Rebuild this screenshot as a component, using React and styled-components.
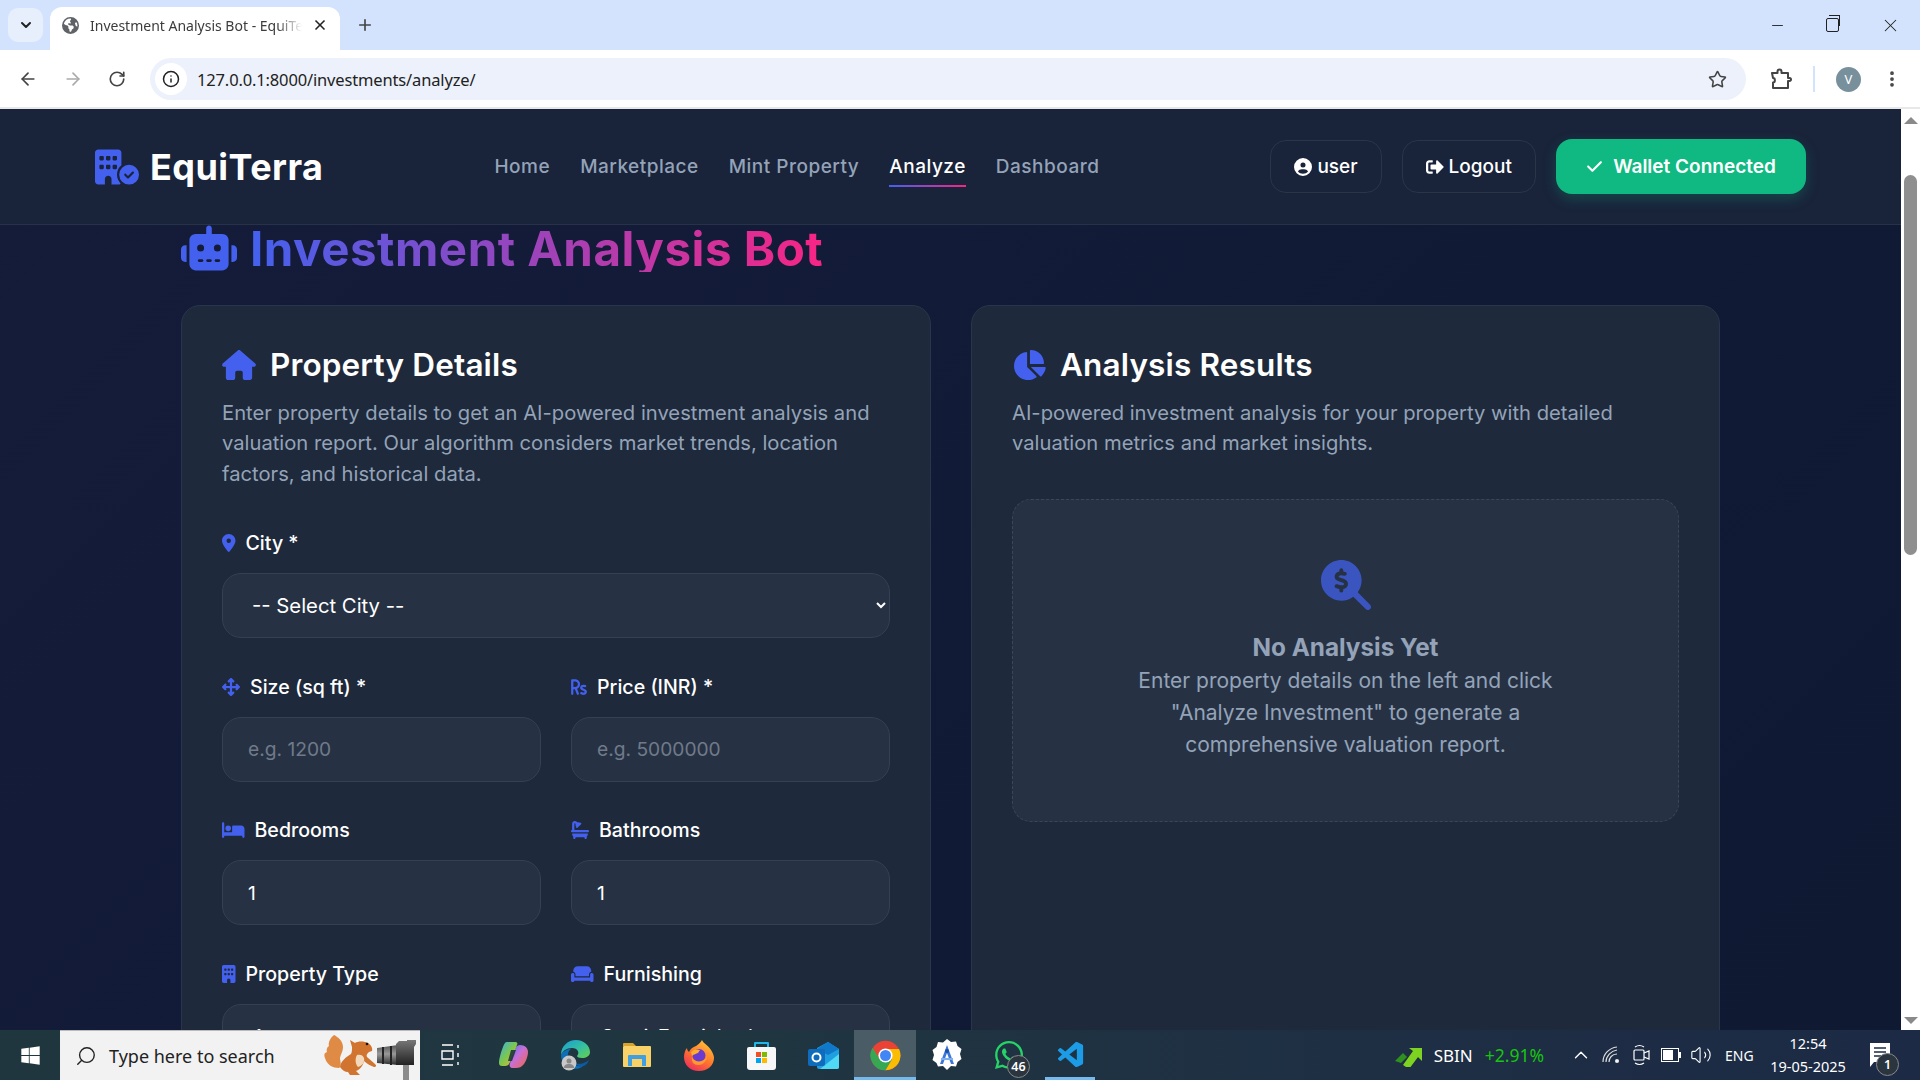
import React from 'react';
import styled, { createGlobalStyle } from 'styled-components';
import { ArrowLeft, ArrowRight, RotateCw, Info, Star, MoreVertical, ChevronDown, Plus, X, Minus, Search, ChevronUp, Volume2 } from 'lucide-react';
import {
  FaBuildingCircleCheck, FaRobot, FaHouse, FaChartPie, FaLocationDot, FaArrowsUpDownLeftRight,
  FaBed, FaBath, FaBuilding, FaCouch, FaMagnifyingGlassDollar, FaCircleUser,
  FaCheck, FaEarthAmericas, FaWindows, FaRupeeSign,
} from 'react-icons/fa6';
import { FaWhatsapp, FaSignOutAlt } from 'react-icons/fa';
import { VscVscode } from 'react-icons/vsc';

const GlobalStyle = createGlobalStyle`
  html, body { margin: 0; padding: 0; height: 100%; overflow: hidden; }
  * { box-sizing: border-box; }
  body { font-family: Inter, "Open Sans", sans-serif; }
`;

const Screen = styled.div`
  width: 1920px;
  height: 1080px;
  display: flex;
  flex-direction: column;
  overflow: hidden;
`;

/* browser chrome */
const TabStrip = styled.div`
  height: 50px;
  background: #d3e3fd;
  display: flex;
  align-items: flex-end;
  padding-left: 8px;
  flex-shrink: 0;
  color: #444;
`;
const TabList = styled.button`
  width: 35px;
  height: 34px;
  margin-bottom: 8px;
  border: 0;
  border-radius: 10px;
  background: #e8effc;
  display: flex;
  align-items: center;
  justify-content: center;
  color: #222;
  padding: 0;
`;
const Tab = styled.div`
  width: 290px;
  height: 43px;
  margin-left: 7px;
  background: #fff;
  border-radius: 12px 12px 0 0;
  display: flex;
  align-items: center;
  padding: 0 12px 7px;
  font: 14px "Noto Sans", sans-serif;
  color: #3c3c3c;
`;
const TabTitle = styled.span`
  flex: 1;
  margin: 0 10px 0 11px;
  white-space: nowrap;
  overflow: hidden;
  mask-image: linear-gradient(90deg, #000 88%, transparent);
`;
const NewTab = styled.div`
  margin: 0 0 13px 16px;
  height: 24px;
  display: flex;
  align-items: center;
`;
const WindowControls = styled.div`
  margin-left: auto;
  height: 50px;
  display: flex;
  align-items: center;
  padding-right: 19px;
  gap: 36px;
  color: #222;
`;
const RestoreIcon = styled.span`
  width: 13px;
  height: 14px;
  border: 1.5px solid #222;
  border-radius: 2px;
  margin: 0 5px 0 4px;
  position: relative;
  &::after {
    content: '';
    position: absolute;
    left: 2px;
    top: -4px;
    width: 10px;
    height: 10px;
    border-top: 1.5px solid #222;
    border-right: 1.5px solid #222;
  }
`;
const Toolbar = styled.div`
  height: 59px;
  background: #fff;
  border-bottom: 2px solid #e8e8e8;
  border-radius: 12px 12px 0 0;
  display: flex;
  align-items: center;
  padding: 1px 0 0 18px;
  flex-shrink: 0;
  color: #444;
`;
const NavIcon = styled.span`
  width: 45px;
  display: flex;
  color: ${p => (p.$dim ? '#aaa' : '#444')};
`;
const Omnibox = styled.div`
  width: 1596px;
  height: 42px;
  margin-left: -3px;
  background: #ecf1fb;
  border-radius: 21px;
  display: flex;
  align-items: center;
  padding: 0 19px 0 5px;
`;
const InfoChip = styled.span`
  width: 32px;
  height: 32px;
  background: #fff;
  border-radius: 50%;
  display: flex;
  align-items: center;
  justify-content: center;
  color: #222;
`;
const Url = styled.span`
  flex: 1;
  margin-left: 10px;
  font: 16.5px "Noto Sans", sans-serif;
  letter-spacing: -0.15px;
  color: #222;
`;
const ToolbarEnd = styled.div`
  display: flex;
  align-items: center;
  margin-left: 24px;
`;
const Divider = styled.span`
  width: 2px;
  height: 26px;
  background: #d3e3fd;
  margin: 0 21px 0 21px;
`;
const Avatar = styled.span`
  width: 25px;
  height: 25px;
  border-radius: 50%;
  background: #78909c;
  color: #fff;
  font: 13px "Noto Sans", sans-serif;
  display: flex;
  align-items: center;
  justify-content: center;
  margin-right: 21px;
`;

/* page */
const Viewport = styled.div`
  flex: 1;
  min-height: 0;
  display: flex;
`;
const Page = styled.div`
  flex: 1;
  min-width: 0;
  overflow: hidden;
  background: linear-gradient(135deg, #141c3a 0%, #111a35 60%, #101932 100%);
`;
const Scrollbar = styled.div`
  width: 19px;
  background: #fff;
  display: flex;
  flex-direction: column;
  align-items: center;
  padding: 8px 0 6px;
`;
const ScrollArrow = styled.span`
  width: 0;
  height: 0;
  border-left: 7px solid transparent;
  border-right: 7px solid transparent;
  ${p => (p.$down
    ? 'border-top: 7px solid #8a8a8a; margin-top: auto;'
    : 'border-bottom: 7px solid #8a8a8a;')}
`;
const ScrollThumb = styled.span`
  width: 13px;
  height: 380px;
  margin-top: 51px;
  border-radius: 7px;
  background: #8f8f8f;
`;
const Nav = styled.header`
  height: 116px;
  background: #19233a;
  border-bottom: 1px solid #283246;
  display: flex;
  align-items: center;
  justify-content: space-between;
  padding: 0 95px;
`;
const Logo = styled.div`
  display: flex;
  align-items: center;
  gap: 11px;
  font: 700 36px Inter, sans-serif;
  letter-spacing: 0.45px;
  color: #fff;
  svg { color: #4361ee; font-size: 44px; }
`;
const NavLinks = styled.nav`
  display: flex;
  gap: 30px;
`;
const NavLink = styled.a`
  position: relative;
  font-size: 19px;
  font-weight: 500;
  letter-spacing: 0.5px;
  color: ${p => (p.$active ? '#fff' : '#94a3b8')};
  ${p => p.$active && `
    &::after {
      content: '';
      position: absolute;
      left: 0;
      right: 0;
      bottom: -9px;
      height: 2px;
      background: linear-gradient(90deg, #4361ee, #f72585);
    }
  `}
`;
const NavActions = styled.div`
  display: flex;
  align-items: center;
  gap: 20px;
`;
const GhostButton = styled.button`
  height: 53px;
  padding: 0 23px;
  border: 1px solid #2b3548;
  border-radius: 16px;
  background: transparent;
  display: flex;
  align-items: center;
  gap: 5px;
  font: 500 19px Inter, sans-serif;
  color: #fff;
  svg { height: 18px; width: 18px; }
`;
const WalletButton = styled.button`
  height: 55px;
  width: 250px;
  border: 0;
  border-radius: 16px;
  background: #10b981;
  box-shadow: 0 5px 14px rgba(16, 185, 129, 0.25);
  display: flex;
  align-items: center;
  justify-content: center;
  gap: 10px;
  font: 600 19px Inter, sans-serif;
  color: #fff;
`;
const Main = styled.main`
  width: 1539px;
  margin: 0 auto;
`;
const PageTitle = styled.h1`
  margin: 0;
  height: 80px;
  display: flex;
  align-items: flex-start;
  gap: 13px;
  font: 700 47.5px/47px Inter, sans-serif;
  letter-spacing: 0.5px;
  svg { color: #4361ee; font-size: 56px; margin-top: -5px; flex-shrink: 0; }
`;
const GradientText = styled.span`
  width: 572px;
  white-space: nowrap;
  background: linear-gradient(90deg, #4361ee, #f72585);
  -webkit-background-clip: text;
  background-clip: text;
  color: transparent;
`;
const Columns = styled.div`
  display: grid;
  grid-template-columns: 750px 749px;
  gap: 40px;
`;
const Card = styled.section`
  background: #1e293b;
  border: 1px solid #2a3549;
  border-radius: 19px;
  padding: 40px 40px;
  height: 1000px;
`;
const CardTitle = styled.h2`
  margin: 0 0 14px;
  display: flex;
  align-items: center;
  gap: 14px;
  font: 600 31.5px/38px Inter, sans-serif;
  letter-spacing: 0.15px;
  color: #fff;
  svg { color: #4361ee; height: 30px; width: 34px; }
`;
const CardText = styled.p`
  margin: 0;
  font-size: 20.2px;
  line-height: 30.4px;
  color: #94a3b8;
`;
const FormBlock = styled.div`
  margin-top: 39px;
`;
const FieldRow = styled.div`
  display: grid;
  grid-template-columns: 319px 319px;
  gap: 30px;
  margin-top: 33.5px;
`;
const Field = styled.div`
  min-width: 0;
`;
const Label = styled.label`
  display: flex;
  align-items: center;
  height: 30px;
  margin-bottom: 15px;
  gap: 10px;
  font-size: 19.6px;
  font-weight: 500;
  color: #fff;
  svg { color: #4361ee; height: 18px; width: ${p => p.$iconWidth}px; }
`;
const controlStyles = `
  width: 100%;
  height: 65px;
  background: #263244;
  border: 1px solid #354052;
  border-radius: 19px;
  color: #fff;
  outline: none;
`;
const Input = styled.input`
  ${controlStyles}
  font: 400 19.2px Inter, sans-serif;
  padding: 0 25px;
`;
const PlaceholderInput = styled(Input)`
  &::placeholder { color: #707a89; }
`;
const Select = styled.select`
  ${controlStyles}
  font: 400 20.3px Inter, sans-serif;
  padding: 0 4px 0 25px;
`;
const EmptyState = styled.div`
  margin-top: 40px;
  width: 667px;
  height: 323px;
  background: #263244;
  border: 1px dashed #3a4659;
  border-radius: 19px;
  display: flex;
  flex-direction: column;
  align-items: center;
  padding: 60px 115px 0;
  text-align: center;
  svg { font-size: 50px; color: #3a55c0; margin-bottom: 22px; }
`;
const EmptyTitle = styled.h3`
  margin: 0;
  font: 700 24.3px/30px Inter, sans-serif;
  color: #94a3b8;
`;
const EmptyText = styled.p`
  margin: 3px 0 0;
  font-size: 21px;
  line-height: 32px;
  color: #94a3b8;
`;

/* taskbar */
const Taskbar = styled.footer`
  height: 50px;
  flex-shrink: 0;
  background: linear-gradient(90deg, #20363f 0%, #1f3540 40%, #1e2e44 75%, #1c2a45 100%);
  display: flex;
  align-items: center;
  color: #fff;
  font-family: "Noto Sans", sans-serif;
`;
const StartButton = styled.div`
  width: 60px;
  display: flex;
  justify-content: center;
  font-size: 21px;
`;
const SearchBox = styled.div`
  width: 360px;
  height: 50px;
  background: #f2f2f2;
  border-top: 1px solid #bbb;
  display: flex;
  align-items: center;
  padding-left: 15px;
  color: #222;
  font-size: 18px;
  gap: 12px;
  position: relative;
  overflow: hidden;
`;
const SearchIcon = styled(Search)`
  transform: scaleX(-1);
`;
const Mascot = styled.svg`
  position: absolute;
  right: 0;
  top: 0;
`;
const TaskIcon = styled.div`
  width: 62px;
  height: 50px;
  display: flex;
  align-items: center;
  justify-content: center;
  position: relative;
  background: ${p => (p.$active ? '#4a5c66' : 'transparent')};
  ${p => p.$open && `
    &::after {
      content: '';
      position: absolute;
      left: ${p.$active ? 0 : 5}px;
      right: ${p.$active ? 0 : 7}px;
      bottom: 0;
      height: 3px;
      background: #76b9ed;
    }
  `}
`;
const CountBadge = styled.span`
  position: absolute;
  right: ${p => p.$right}px;
  bottom: ${p => p.$bottom}px;
  min-width: 23px;
  height: 23px;
  border-radius: 50%;
  background: #2a3540;
  border: 1px solid #888;
  font-size: 12.5px;
  font-weight: 600;
  display: flex;
  align-items: center;
  justify-content: center;
  color: #fff;
`;
const Tray = styled.div`
  margin-left: auto;
  display: flex;
  align-items: center;
  height: 50px;
  padding-right: 19px;
  font-size: 17px;
`;
const Stock = styled.span`
  margin-left: 11px;
`;
const StockChange = styled.span`
  margin: 0 22px 0 12px;
  font-size: 17.5px;
  color: #16c60c;
`;
const TrayIcon = styled.span`
  width: 30px;
  display: flex;
  justify-content: center;
`;
const Lang = styled.span`
  margin-left: 9px;
  font-size: 14px;
  width: 30px;
`;
const Clock = styled.div`
  width: 96px;
  margin-left: 5px;
  text-align: center;
  font-size: 14.5px;
  line-height: 23px;
`;
const Notify = styled.div`
  width: 42px;
  margin-left: 3px;
  position: relative;
  height: 50px;
  display: flex;
  align-items: center;
  justify-content: center;
`;

const Extension = () => (
  <svg width="22" height="24" viewBox="0 0 22 24" fill="none" stroke="#444" strokeWidth="2" strokeLinejoin="round">
    <path d="M2 6h5.500V4.500a2 2 0 0 1 4 0V6H18v5h1.500a1.500 1.500 0 0 1 0 3H18v7H3v-5.500c2.500 0 2.500-4.500 0-4.500Z" />
  </svg>
);
const ChromeGlyph = () => (
  <svg width="31" height="31" viewBox="0 0 48 48">
    <circle cx="24" cy="24" r="23" fill="#ea4335" />
    <path d="M24 24 4 36A23 23 0 0 1 4 12L14 28Z" fill="#34a853" />
    <path d="M4 36 24 24 34 30 24 47A23 23 0 0 1 4 36Z" fill="#34a853" />
    <path d="M24 14H45A23 23 0 0 1 24 47L34 30Z" fill="#fbbc04" />
    <circle cx="24" cy="24" r="11" fill="#fff" />
    <circle cx="24" cy="24" r="8.5" fill="#4285f4" />
  </svg>
);
const Copilot = () => (
  <svg width="29" height="26" viewBox="0 0 29 26">
    <defs>
      <linearGradient id="cpa" x1="0" y1="0" x2="1" y2="1">
        <stop offset="0" stopColor="#2fb5ea" />
        <stop offset="0.5" stopColor="#7fc64b" />
        <stop offset="1" stopColor="#f4b73b" />
      </linearGradient>
      <linearGradient id="cpb" x1="0" y1="0" x2="1" y2="1">
        <stop offset="0" stopColor="#3a7be8" />
        <stop offset="0.45" stopColor="#c86fd8" />
        <stop offset="1" stopColor="#f0663f" />
      </linearGradient>
    </defs>
    <path d="M21 3c5 0 8 3 8 7 0 5-3 12-6 14-2 2-5 2-9 2-3 0-4-2-3-5l5-14c1-3 3-4 5-4Z" fill="url(#cpb)" />
    <path d="M8 0h8c2 0 3 1 2 3l-7 17c-1 3-3 4-5 4H3c-2 0-3-1-3-3 0-4 2-11 4-16 1-3 2-5 4-5Z" fill="url(#cpa)" />
    <path d="M12 8h5l-4 11h-4Z" fill="#17313a" opacity=".85" />
  </svg>
);
const Edge = () => (
  <svg width="30" height="32" viewBox="0 0 30 32">
    <defs>
      <linearGradient id="edg" x1="0" y1="0" x2="1" y2="1">
        <stop offset="0" stopColor="#1a9ad6" />
        <stop offset="0.55" stopColor="#35c1a0" />
        <stop offset="1" stopColor="#6ad04b" />
      </linearGradient>
    </defs>
    <path d="M1 16C1 7 8 1 16 1c8 0 14 6 14 12 0 4-4 6-8 6-3 0-5-1-5-2 3-3 1-8-5-8-6 0-9 3-11 7Z" fill="url(#edg)" />
    <path d="M1 16c3-5 7-6 10-6-3 2-4 6-2 10 2 5 7 8 12 7l3-1c-3 3-6 4-10 4C7 30 1 24 1 16Z" fill="#0c6fb8" />
    <path d="M29 21c-1 3-3 5-5 6-4 1-8 0-11-3 3 1 10 2 16-3Z" fill="#0c59a4" />
    <circle cx="9" cy="24" r="7.500" fill="#c8c8c8" />
    <circle cx="9" cy="22" r="2.500" fill="#888" />
    <path d="M4 29c0-3 2-4 5-4s5 1 5 4Z" fill="#888" />
  </svg>
);
const Explorer = () => (
  <svg width="28" height="24" viewBox="0 0 28 24">
    <path d="M0 1a1 1 0 0 1 1-1h9l3 3H0Z" fill="#d9a32a" />
    <rect y="3" width="28" height="21" rx="1" fill="#f8d268" />
    <path d="M5 13a1 1 0 0 1 1-1h16a1 1 0 0 1 1 1v10h-4v-7H9v7H5Z" fill="#3f9fe0" />
  </svg>
);
const Firefox = () => (
  <svg width="30" height="31" viewBox="0 0 30 31">
    <defs>
      <linearGradient id="ffx" x1="0.8" y1="0" x2="0.2" y2="1">
        <stop offset="0" stopColor="#ffc83a" />
        <stop offset="0.5" stopColor="#ff7a2c" />
        <stop offset="1" stopColor="#ee2a5e" />
      </linearGradient>
    </defs>
    <path d="M18 0c1 3 6 5 9 10 2 3 3 6 3 8 0 7-6 13-15 13S0 25 0 17c0-3 1-7 3-9 0 2 1 3 2 4 1-3 4-5 7-6 3-2 5-4 6-6Z" fill="url(#ffx)" />
    <circle cx="15" cy="15.500" r="6.500" fill="#6a3bd1" />
    <path d="M7 12c3-3 6-3 9-2l-2 3c-2 1-4 1-6 3Z" fill="#ffb02e" />
    <path d="M8 17c2 5 9 6 13 2 1-1 2-3 2-5 1 6-3 11-9 11-4 0-7-3-6-8Z" fill="#ff9a2e" />
  </svg>
);
const Store = () => (
  <svg width="29" height="29" viewBox="0 0 29 29">
    <path d="M8 7V2h13v5" fill="none" stroke="#1fb6e8" strokeWidth="2" strokeLinejoin="round" />
    <path d="M0 8a2 2 0 0 1 2-2h25a2 2 0 0 1 2 2v18a3 3 0 0 1-3 3H3a3 3 0 0 1-3-3Z" fill="#f7f7f7" />
    <rect x="9" y="11" width="5" height="5" fill="#f25022" />
    <rect x="15" y="11" width="5" height="5" fill="#7fba00" />
    <rect x="9" y="17" width="5" height="5" fill="#00a4ef" />
    <rect x="15" y="17" width="5" height="5" fill="#ffb900" />
  </svg>
);
const Outlook = () => (
  <svg width="31" height="27" viewBox="0 0 31 27">
    <path d="M9 6 20 0l11 7v18a2 2 0 0 1-2 2H11a2 2 0 0 1-2-2Z" fill="#1f9fe0" />
    <path d="M20 0l11 7-11 6-11-6Z" fill="#0f78c8" />
    <path d="M31 12v13a2 2 0 0 1-2 2H12Z" fill="#50d9f5" />
    <rect y="7" width="17" height="17" rx="2" fill="#0f6cbd" />
    <circle cx="8.500" cy="15.500" r="4" fill="none" stroke="#fff" strokeWidth="2" />
  </svg>
);
const StudioBadge = () => (
  <svg width="30" height="32" viewBox="0 0 30 32">
    <path d="M15 0l4 3 5-.5 1.500 4.500 4 3-1.500 5 1.500 5-4 3-1.500 4.500-5-.5-4 4-4-4-5 .5L4.500 24l-4-3 1.500-5-1.500-5 4-3L6 3l5 .5Z" fill="#fff" />
    <path d="M15 6 8 25h3l4-11 4 11h3Z" fill="#3b78d8" />
    <circle cx="15" cy="12" r="2" fill="#1d4fa8" />
    <path d="M9 19h12v2H9Z" fill="#7fb0ee" />
  </svg>
);
const Squirrel = () => (
  <Mascot width="100" height="50" viewBox="0 0 100 50">
    <defs>
      <linearGradient id="lens" x1="0" y1="0" x2="0" y2="1">
        <stop offset="0" stopColor="#555" />
        <stop offset="0.45" stopColor="#999" />
        <stop offset="1" stopColor="#2c2c2c" />
      </linearGradient>
      <linearGradient id="cam" x1="0" y1="0" x2="0" y2="1">
        <stop offset="0" stopColor="#777" />
        <stop offset="1" stopColor="#222" />
      </linearGradient>
    </defs>
    {/* tail */}
    <path d="M14 4c4 2 9 6 9 12 0 5-3 8-3 12 1 4 1 8-1 9-6 0-12-3-14-10-1-3-1-5 2-6-1-2 0-5 2-6-1-3 1-8 5-11Z" fill="#df8a45" />
    {/* body */}
    <path d="M20 36c1-6 6-10 11-13 1-2 1-4 1-7l-2-7 5 3c3-2 9-2 13 0 3 2 5 5 4 8l-3 1c-2 2-3 3-2 5l8 7c2 2 1 3-1 3-3-1-7-3-10-6-1 4-3 8-8 10l4 4-10 0-2-3c-3 0-6-2-8-5Z" fill="#d0742f" />
    <path d="M37 24c3-1 6 0 7 3 1 4-2 8-6 9-3-3-3-9-1-12Z" fill="#f2d9bd" />
    <circle cx="47" cy="13" r="1.300" fill="#1a1208" />
    {/* camera */}
    <path d="M57 17l21-3v20l-21-2Z" fill="url(#lens)" />
    <rect x="62" y="16" width="2" height="17" fill="#222" />
    <rect x="70" y="15" width="2" height="19" fill="#222" />
    <path d="M76 13l3-3h8v-1h9v4l-2 3v18H76Z" fill="url(#cam)" />
    <rect x="83" y="34" width="6" height="16" fill="#8b8b8b" />
  </Mascot>
);

const taskIcons = [
  { key: 'copilot', node: <Copilot /> },
  { key: 'edge', node: <Edge /> },
  { key: 'explorer', node: <Explorer /> },
  { key: 'firefox', node: <Firefox /> },
  { key: 'store', node: <Store /> },
  { key: 'outlook', node: <Outlook /> },
  { key: 'chrome', node: <ChromeGlyph />, active: true, open: true },
  { key: 'studio', node: <StudioBadge /> },
];

const App = () => {
  return (
    <Screen>
      <GlobalStyle />
      <TabStrip>
        <TabList><ChevronDown size={16} strokeWidth={3} /></TabList>
        <Tab>
          <FaEarthAmericas size={17} color="#5f6368" />
          <TabTitle>Investment Analysis Bot - EquiTerra</TabTitle>
          <X size={16} strokeWidth={2.5} color="#222" />
        </Tab>
        <NewTab><Plus size={18} strokeWidth={2.2} /></NewTab>
        <WindowControls>
          <Minus size={17} strokeWidth={1.3} />
          <RestoreIcon />
          <X size={21} strokeWidth={1.2} />
        </WindowControls>
      </TabStrip>
      <Toolbar>
        <NavIcon><ArrowLeft size={20} /></NavIcon>
        <NavIcon $dim><ArrowRight size={20} /></NavIcon>
        <NavIcon><RotateCw size={18} strokeWidth={2.2} /></NavIcon>
        <Omnibox>
          <InfoChip><Info size={18} /></InfoChip>
          <Url>127.0.0.1:8000/investments/analyze/</Url>
          <Star size={19} strokeWidth={2} />
        </Omnibox>
        <ToolbarEnd>
          <Extension />
          <Divider />
          <Avatar>V</Avatar>
          <MoreVertical size={20} strokeWidth={2.5} />
        </ToolbarEnd>
      </Toolbar>

      <Viewport>
        <Page>
          <Nav>
            <Logo><FaBuildingCircleCheck />EquiTerra</Logo>
            <NavLinks>
              <NavLink>Home</NavLink>
              <NavLink>Marketplace</NavLink>
              <NavLink>Mint Property</NavLink>
              <NavLink $active>Analyze</NavLink>
              <NavLink>Dashboard</NavLink>
            </NavLinks>
            <NavActions>
              <GhostButton><FaCircleUser />user</GhostButton>
              <GhostButton><FaSignOutAlt />Logout</GhostButton>
              <WalletButton><FaCheck size={17} />Wallet Connected</WalletButton>
            </NavActions>
          </Nav>
          <Main>
            <PageTitle><FaRobot /><GradientText>Investment Analysis Bot</GradientText></PageTitle>
            <Columns>
              <Card>
                <CardTitle><FaHouse />Property Details</CardTitle>
                <CardText>
                  Enter property details to get an AI-powered investment analysis and valuation report.
                  Our algorithm considers market trends, location factors, and historical data.
                </CardText>
                <FormBlock>
                  <Field>
                    <Label $iconWidth={13.5}><FaLocationDot />City *</Label>
                    <Select defaultValue="">
                      <option value="">-- Select City --</option>
                    </Select>
                  </Field>
                  <FieldRow>
                    <Field>
                      <Label $iconWidth={18}><FaArrowsUpDownLeftRight />Size (sq ft) *</Label>
                      <PlaceholderInput placeholder="e.g. 1200" />
                    </Field>
                    <Field>
                      <Label $iconWidth={16}><FaRupeeSign />Price (INR) *</Label>
                      <PlaceholderInput placeholder="e.g. 5000000" />
                    </Field>
                  </FieldRow>
                  <FieldRow>
                    <Field>
                      <Label $iconWidth={22.5}><FaBed />Bedrooms</Label>
                      <Input defaultValue="1" />
                    </Field>
                    <Field>
                      <Label $iconWidth={18}><FaBath />Bathrooms</Label>
                      <Input defaultValue="1" />
                    </Field>
                  </FieldRow>
                  <FieldRow>
                    <Field>
                      <Label $iconWidth={13.5}><FaBuilding />Property Type</Label>
                      <Select defaultValue="apartment">
                        <option value="apartment">Apartment</option>
                      </Select>
                    </Field>
                    <Field>
                      <Label $iconWidth={22.5}><FaCouch />Furnishing</Label>
                      <Select defaultValue="semi">
                        <option value="semi">Semi-Furnished</option>
                      </Select>
                    </Field>
                  </FieldRow>
                </FormBlock>
              </Card>
              <Card>
                <CardTitle><FaChartPie />Analysis Results</CardTitle>
                <CardText>
                  AI-powered investment analysis for your property with detailed valuation metrics and market insights.
                </CardText>
                <EmptyState>
                  <FaMagnifyingGlassDollar />
                  <EmptyTitle>No Analysis Yet</EmptyTitle>
                  <EmptyText>
                    Enter property details on the left and click "Analyze Investment" to generate a comprehensive valuation report.
                  </EmptyText>
                </EmptyState>
              </Card>
            </Columns>
          </Main>
        </Page>
        <Scrollbar>
          <ScrollArrow />
          <ScrollThumb />
          <ScrollArrow $down />
        </Scrollbar>
      </Viewport>

      <Taskbar>
        <StartButton><FaWindows /></StartButton>
        <SearchBox>
          <SearchIcon size={22} strokeWidth={1.5} />
          Type here to search
          <Squirrel />
        </SearchBox>
        <TaskIcon>
          <svg width="20" height="22" viewBox="0 0 20 22" fill="none" stroke="#fff" strokeWidth="1.4">
            <path d="M1 1h11M1 21h11M1 7h11v8H1zM17 1v3M17 9v4M17 18v3" />
          </svg>
        </TaskIcon>
        {taskIcons.map(item => (
          <TaskIcon key={item.key} $active={item.active} $open={item.open}>{item.node}</TaskIcon>
        ))}
        <TaskIcon>
          <FaWhatsapp size={32} color="#25d366" />
          <CountBadge $right={10} $bottom={2}>46</CountBadge>
        </TaskIcon>
        <TaskIcon $open>
          <VscVscode size={31} color="#1c9be6" />
        </TaskIcon>
        <Tray>
          <svg width="28" height="24" viewBox="0 0 28 24">
            <path d="M0 18 8 10l4 4-6 6Z" fill="#2f8f1f" />
            <path d="M8 22l10-14-4-3h13v13l-4-4-9 12Z" fill="#7ed321" />
          </svg>
          <Stock>SBIN</Stock>
          <StockChange>+2.91%</StockChange>
          <TrayIcon><ChevronUp size={22} strokeWidth={1.5} /></TrayIcon>
          <TrayIcon>
            <svg width="18" height="18" viewBox="0 0 18 18" fill="none" stroke="#ddd" strokeWidth="1.2">
              <path d="M1 16C1 8 7 2 15 1M4 16c0-6 5-11 11-12M7 16c0-4 3-8 8-8" />
              <circle cx="15" cy="15" r="1.5" fill="#fff" />
            </svg>
          </TrayIcon>
          <TrayIcon>
            <svg width="18" height="22" viewBox="0 0 18 22" fill="none" stroke="#fff" strokeWidth="1.2">
              <rect x="2" y="6" width="10" height="10" rx="1" />
              <path d="M12 9l5-2v8l-5-2M3 3c3-2 6-2 9 0M3 19c3 2 6 2 9 0" />
            </svg>
          </TrayIcon>
          <TrayIcon>
            <svg width="20" height="14" viewBox="0 0 20 14">
              <rect x="0.500" y="0.500" width="17" height="13" fill="none" stroke="#fff" />
              <rect x="2" y="2" width="10" height="10" fill="#fff" />
              <rect x="18" y="4" width="2" height="6" fill="#fff" />
            </svg>
          </TrayIcon>
          <TrayIcon><Volume2 size={22} strokeWidth={1.2} /></TrayIcon>
          <Lang>ENG</Lang>
          <Clock>12:54<br />19-05-2025</Clock>
          <Notify>
            <svg width="20" height="25" viewBox="0 0 20 25">
              <path d="M0 0h20v19H4l-4 5Z" fill="#fff" />
              <path d="M4 5h12M4 9h12M4 13h8" stroke="#1c2a45" strokeWidth="1.5" />
            </svg>
            <CountBadge $right={2} $bottom={4}>1</CountBadge>
          </Notify>
        </Tray>
      </Taskbar>
    </Screen>
  );
};

export default App;
